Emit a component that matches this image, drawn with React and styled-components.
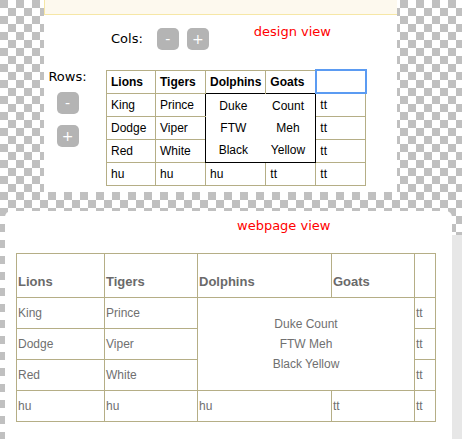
import React from 'react';
import styled, { createGlobalStyle } from 'styled-components';

const GlobalStyle = createGlobalStyle`
  html, body {
    margin: 0;
    padding: 0;
  }
  body {
    font-family: "DejaVu Sans", Verdana, sans-serif;
  }
`;

const Page = styled.div`
  width: 462px;
  height: 439px;
  overflow: hidden;
  display: flex;
  flex-direction: column;
  background: repeating-conic-gradient(#fff 0 25%, #c0c0c0 0 50%) 0 0 / 16px 16px;
`;

const DesignPanel = styled.section`
  margin-left: 44px;
  width: 353px;
  height: 192px;
  flex-shrink: 0;
  background: #fff;
  display: flex;
  flex-direction: column;
`;

const Strip = styled.div`
  height: 14px;
  background: #fdf9ee;
  border-left: 1px solid #f6e7a6;
  border-bottom: 1px solid #f6e7a6;
`;

const ColsBar = styled.div`
  display: flex;
  align-items: center;
  margin-top: 13px;
  padding-left: 67px;
`;

const Label = styled.span`
  font-size: 13px;
  line-height: 16px;
  color: #000;
`;

const SmallButton = styled.button`
  width: 22px;
  height: 22px;
  padding: 0;
  border: none;
  border-radius: 5px;
  background: #b4b4b4;
  color: #fff;
  font-family: "DejaVu Sans", sans-serif;
  font-size: 14px;
  line-height: 22px;
  text-align: center;
  margin-left: ${p => p.$gap || 0}px;
`;

const ViewTitle = styled.div`
  font-size: 13px;
  line-height: 16px;
  color: #ff0000;
  margin-left: ${p => p.$left}px;
  margin-top: ${p => p.$top || 0}px;
  align-self: flex-start;
`;

const DesignBody = styled.div`
  display: flex;
  align-items: flex-start;
  gap: 19px;
  margin-top: 19px;
  padding-left: 4px;
`;

const RowsControls = styled.div`
  width: 39px;
  display: flex;
  flex-direction: column;
  align-items: center;
  gap: 11px;

  & > span {
    margin-bottom: -4px;
  }
`;

const Table = styled.table`
  border-collapse: collapse;
  table-layout: fixed;
  font-family: "Liberation Sans", Arial, sans-serif;
`;

const DCell = styled.td`
  border: 1px solid #b5ae86;
  ${p => p.$noRight && 'border-right: none;'}
  ${p => p.$noBottom && 'border-bottom: none;'}
  height: 22px;
  padding: 0 4px;
  font-size: 12px;
  font-weight: ${p => (p.$head ? 'bold' : 'normal')};
  color: #000;
  white-space: nowrap;
  overflow: hidden;
  vertical-align: middle;
`;

const SelectedCell = styled(DCell)`
  border: 2px solid #5b9bf2;
  height: 20px;
`;

const MergedCell = styled.td`
  border: 1px solid #000;
  padding: 0;
  vertical-align: middle;
`;

const MiniGrid = styled.div`
  display: grid;
  grid-template-columns: 1fr 1fr;
  grid-auto-rows: 22px;
  align-items: center;
  justify-items: center;
  font-size: 12px;
  color: #000;
`;

const BottomRow = styled.div`
  display: flex;
  flex: 1;
  margin-top: 19px;
`;

const WebPanel = styled.section`
  margin-left: 5px;
  width: 447px;
  background: #fff;
  border-radius: 6px 6px 0 0;
  padding-top: 7px;
  box-sizing: border-box;
`;

const ScrollTrack = styled.div`
  width: 10px;
  margin-top: 24px;
  background: #e7e7e7;
`;

const WebTable = styled(Table)`
  margin: 19px 0 0 11px;
  color: #707070;
`;

const WHead = styled.th`
  border: 1px solid #b5ae86;
  height: 31px;
  padding: 12px 1px 0;
  font-size: 13px;
  font-weight: bold;
  text-align: left;
  color: #6a6a6a;
  vertical-align: middle;
`;

const WCell = styled.td`
  border: 1px solid #b5ae86;
  height: 30px;
  padding: 0 1px;
  font-size: 12px;
  color: #707070;
  vertical-align: middle;
  white-space: nowrap;
`;

const WMerged = styled(WCell)`
  text-align: center;
  line-height: 20px;
`;

const designRows = [
  ['King', 'Prince'],
  ['Dodge', 'Viper'],
  ['Red', 'White'],
];

const mini = ['Duke', 'Count', 'FTW', 'Meh', 'Black', 'Yellow'];

const DesignView = () => (
  <DesignPanel>
    <Strip />
    <ColsBar>
      <Label>Cols:</Label>
      <SmallButton $gap={14}>-</SmallButton>
      <SmallButton $gap={8}>+</SmallButton>
      <ViewTitle $left={45} $top={-4}>design view</ViewTitle>
    </ColsBar>
    <DesignBody>
      <RowsControls>
        <Label>Rows:</Label>
        <SmallButton>-</SmallButton>
        <SmallButton>+</SmallButton>
      </RowsControls>
      <Table>
        <colgroup>
          <col style={{ width: 49 }} />
          <col style={{ width: 50 }} />
          <col style={{ width: 59 }} />
          <col style={{ width: 50 }} />
          <col style={{ width: 50 }} />
        </colgroup>
        <tbody>
          <tr>
            <DCell $head>Lions</DCell>
            <DCell $head>Tigers</DCell>
            <DCell $head $noBottom>Dolphins</DCell>
            <DCell $head $noBottom>Goats</DCell>
            <SelectedCell />
          </tr>
          {designRows.map((r, i) => (
            <tr key={r[0]}>
              <DCell>{r[0]}</DCell>
              <DCell $noRight>{r[1]}</DCell>
              {i === 0 && (
                <MergedCell colSpan={2} rowSpan={3}>
                  <MiniGrid>
                    {mini.map(m => <span key={m}>{m}</span>)}
                  </MiniGrid>
                </MergedCell>
              )}
              <DCell>tt</DCell>
            </tr>
          ))}
          <tr>
            <DCell>hu</DCell>
            <DCell>hu</DCell>
            <DCell>hu</DCell>
            <DCell>tt</DCell>
            <DCell>tt</DCell>
          </tr>
        </tbody>
      </Table>
    </DesignBody>
  </DesignPanel>
);

const WebView = () => (
  <BottomRow>
    <WebPanel>
      <ViewTitle $left={232}>webpage view</ViewTitle>
      <WebTable>
        <colgroup>
          <col style={{ width: 88 }} />
          <col style={{ width: 93 }} />
          <col style={{ width: 134 }} />
          <col style={{ width: 83 }} />
          <col style={{ width: 21 }} />
        </colgroup>
        <thead>
          <tr>
            <WHead>Lions</WHead>
            <WHead>Tigers</WHead>
            <WHead>Dolphins</WHead>
            <WHead>Goats</WHead>
            <WHead />
          </tr>
        </thead>
        <tbody>
          {designRows.map((r, i) => (
            <tr key={r[0]}>
              <WCell>{r[0]}</WCell>
              <WCell>{r[1]}</WCell>
              {i === 0 && (
                <WMerged colSpan={2} rowSpan={3}>
                  <div>Duke Count</div>
                  <div>FTW Meh</div>
                  <div>Black Yellow</div>
                </WMerged>
              )}
              <WCell>tt</WCell>
            </tr>
          ))}
          <tr>
            <WCell>hu</WCell>
            <WCell>hu</WCell>
            <WCell>hu</WCell>
            <WCell>tt</WCell>
            <WCell>tt</WCell>
          </tr>
        </tbody>
      </WebTable>
    </WebPanel>
    <ScrollTrack />
  </BottomRow>
);

export default function App() {
  return (
    <Page>
      <GlobalStyle />
      <DesignView />
      <WebView />
    </Page>
  );
}
